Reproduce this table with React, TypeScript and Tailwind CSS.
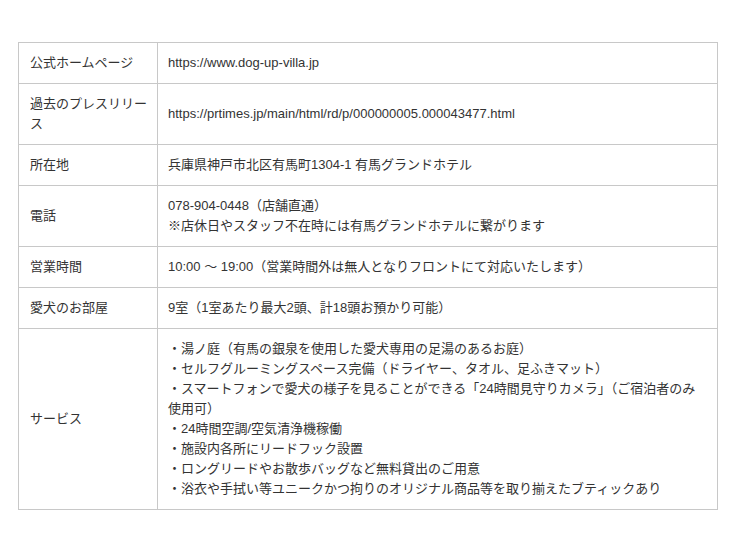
const rows: { label: string; lines: string[] }[] = [
  { label: '公式ホームページ', lines: ['https://www.dog-up-villa.jp'] },
  { label: '過去のプレスリリース', lines: ['https://prtimes.jp/main/html/rd/p/000000005.000043477.html'] },
  { label: '所在地', lines: ['兵庫県神戸市北区有馬町1304-1 有馬グランドホテル'] },
  { label: '電話', lines: ['078-904-0448（店舗直通）', '※店休日やスタッフ不在時には有馬グランドホテルに繋がります'] },
  { label: '営業時間', lines: ['10:00 〜 19:00（営業時間外は無人となりフロントにて対応いたします）'] },
  { label: '愛犬のお部屋', lines: ['9室（1室あたり最大2頭、計18頭お預かり可能）'] },
  {
    label: 'サービス',
    lines: [
      '・湯ノ庭（有馬の銀泉を使用した愛犬専用の足湯のあるお庭）',
      '・セルフグルーミングスペース完備（ドライヤー、タオル、足ふきマット）',
      '・スマートフォンで愛犬の様子を見ることができる「24時間見守りカメラ」（ご宿泊者のみ使用可）',
      '・24時間空調/空気清浄機稼働',
      '・施設内各所にリードフック設置',
      '・ロングリードやお散歩バッグなど無料貸出のご用意',
      '・浴衣や手拭い等ユニークかつ拘りのオリジナル商品等を取り揃えたブティックあり',
    ],
  },
]

export default function App() {
  return (
    <div className="min-h-[550px] bg-white pt-[42px] pl-[18px] font-['Liberation_Sans','Noto_Sans_CJK_JP',sans-serif] text-[13px] leading-[20px] text-[#333]">
      <table className="w-[700px] border-collapse border border-[#c8c8c8]">
        <tbody>
          {rows.map((row) => (
            <tr key={row.label}>
              <td className="w-[139px] border border-[#c8c8c8] pl-[11px] pr-[8px] py-[10px] align-middle">{row.label}</td>
              <td className="border border-[#c8c8c8] px-[10px] py-[10px] align-middle">
                {row.lines.map((line) => (
                  <div key={line}>{line}</div>
                ))}
              </td>
            </tr>
          ))}
        </tbody>
      </table>
    </div>
  )
}
